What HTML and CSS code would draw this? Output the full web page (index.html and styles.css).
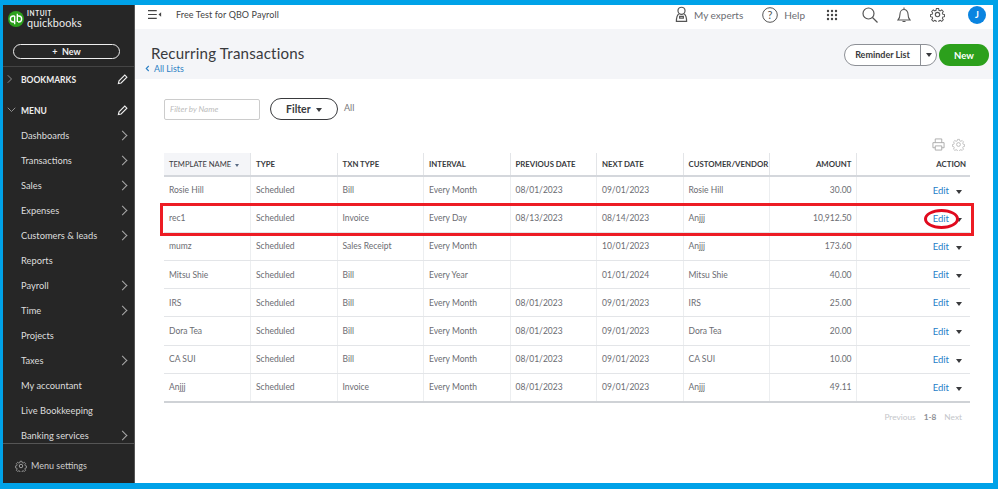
FILE: index.html
```html
<!DOCTYPE html>
<html lang="en">
<head>
<meta charset="utf-8">
<title>Recurring Transactions</title>
<link rel="stylesheet" href="styles.css">
</head>
<body>
<div class="frame">
  <aside class="sidebar">
    <div class="brand">
      <svg class="logo" viewBox="0 0 24 24" width="16" height="16"><circle cx="12" cy="12" r="12" fill="#2ca01c"/><path d="M10 7.500H8a4.500 4.500 0 0 0 0 9h1M14 7.500h2a4.500 4.500 0 0 1 0 9h-1M10 7.500V20M14 4v12.500" fill="none" stroke="#fff" stroke-width="2"/></svg>
      <div class="brand-text"><span class="intuit">INTUIT</span><span class="qb">quickbooks</span></div>
    </div>
    <div class="new-wrap"><button class="new-side">+ &nbsp;New</button></div>
    <div class="side-head bookmarks">
      <svg class="chev" viewBox="0 0 8 12" width="6" height="10"><path d="M1 1l5 5-5 5" fill="none" stroke="#9a9a9a" stroke-width="1.200"/></svg>
      <span>BOOKMARKS</span>
      <svg class="pen" viewBox="0 0 12 12" width="11" height="11"><path d="M1.500 10.500l.7-3L8.500 1.200l2.300 2.300-6.300 6.300z" fill="none" stroke="#eee" stroke-width="1.200"/></svg>
    </div>
    <div class="side-head menu">
      <svg class="chev" viewBox="0 0 12 8" width="9" height="6"><path d="M1 1l5 5 5-5" fill="none" stroke="#9a9a9a" stroke-width="1.200"/></svg>
      <span>MENU</span>
      <svg class="pen" viewBox="0 0 12 12" width="11" height="11"><path d="M1.500 10.500l.7-3L8.500 1.200l2.300 2.300-6.300 6.300z" fill="none" stroke="#eee" stroke-width="1.200"/></svg>
    </div>
    <nav class="nav">
      <a class="nav-item arrow">Dashboards</a>
      <a class="nav-item arrow">Transactions</a>
      <a class="nav-item arrow">Sales</a>
      <a class="nav-item arrow">Expenses</a>
      <a class="nav-item arrow">Customers &amp; leads</a>
      <a class="nav-item">Reports</a>
      <a class="nav-item arrow">Payroll</a>
      <a class="nav-item arrow">Time</a>
      <a class="nav-item">Projects</a>
      <a class="nav-item arrow">Taxes</a>
      <a class="nav-item">My accountant</a>
      <a class="nav-item">Live Bookkeeping</a>
      <a class="nav-item arrow">Banking services</a>
    </nav>
    <div class="menu-settings">
      <svg viewBox="0 0 24 24" width="12" height="12" fill="none" stroke="#aaa" stroke-width="1.800"><circle cx="12" cy="12" r="3.500"/><path d="M10 1.500h4l.6 3 2.300 1 2.600-1.700 2.800 2.800-1.700 2.600 1 2.300 2.900.6v3.800l-2.900.6-1 2.300 1.700 2.600-2.800 2.800-2.600-1.700-2.300 1-.6 2.900h-4l-.6-2.900-2.300-1-2.600 1.700-2.800-2.800 1.700-2.600-1-2.300-2.900-.6v-3.800l2.900-.6 1-2.300-1.700-2.600 2.800-2.800 2.600 1.700 2.300-1z" transform="translate(1.200 1.200) scale(.9)"/></svg>
      <span>Menu settings</span>
    </div>
  </aside>
  <main class="main">
    <header class="topbar">
      <div class="top-left">
        <svg viewBox="0 0 16 12" width="14" height="11"><path d="M0 1.500h10M0 6h10M0 10.500h10" stroke="#444" stroke-width="1.300"/><path d="M15 3.500v5L12 6z" fill="#444"/></svg>
        <span class="company">Free Test for QBO Payroll</span>
      </div>
      <div class="top-right">
        <span class="top-link experts">
          <svg viewBox="0 0 14 18" width="13" height="17" fill="none" stroke="#555" stroke-width="1.300"><circle cx="7" cy="5" r="3.800"/><path d="M4 8.500C2 10 1.500 12 1.500 16.500h11C12.500 12 12 10 10 8.500M5 11h4v2H5z"/></svg>
          My experts
        </span>
        <span class="top-link help">
          <svg viewBox="0 0 16 16" width="16" height="16"><circle cx="8" cy="8" r="7.300" fill="none" stroke="#555" stroke-width="1"/><text x="8" y="11.500" text-anchor="middle" class="q">?</text></svg>
          Help
        </span>
        <svg class="ico grid" viewBox="0 0 12 12" width="12" height="12" fill="#444"><circle cx="2" cy="2" r="1.200"/><circle cx="6" cy="2" r="1.200"/><circle cx="10" cy="2" r="1.200"/><circle cx="2" cy="6" r="1.200"/><circle cx="6" cy="6" r="1.200"/><circle cx="10" cy="6" r="1.200"/><circle cx="2" cy="10" r="1.200"/><circle cx="6" cy="10" r="1.200"/><circle cx="10" cy="10" r="1.200"/></svg>
        <svg class="ico search" viewBox="0 0 16 16" width="16" height="16" fill="none" stroke="#555" stroke-width="1.200"><circle cx="6.500" cy="6.500" r="5.500"/><path d="M10.500 10.500L15.500 15.500"/></svg>
        <svg class="ico bell" viewBox="0 0 14 16" width="14" height="16" fill="none" stroke="#555" stroke-width="1.100"><path d="M1 13h12c-1.500-1.500-2-3-2-6 0-2.500-1.800-4.500-4-4.500S3 4.500 3 7c0 3-.5 4.500-2 6zM5.500 14.500h3M7 .5v2"/></svg>
        <svg class="ico cog" viewBox="0 0 24 24" width="15" height="15" fill="none" stroke="#555" stroke-width="1.800"><circle cx="12" cy="12" r="3.500"/><path d="M10 1.500h4l.6 3 2.300 1 2.600-1.700 2.800 2.800-1.700 2.600 1 2.300 2.900.6v3.800l-2.900.6-1 2.300 1.700 2.600-2.800 2.800-2.600-1.700-2.300 1-.6 2.900h-4l-.6-2.900-2.300-1-2.600 1.700-2.800-2.800 1.700-2.600-1-2.300-2.900-.6v-3.800l2.900-.6 1-2.300-1.700-2.600 2.800-2.800 2.600 1.700 2.300-1z" transform="translate(1.200 1.200) scale(.9)"/></svg>
        <span class="avatar">J</span>
      </div>
    </header>
    <section class="page-head">
      <div class="titles">
        <h1>Recurring Transactions</h1>
        <a class="back"><svg viewBox="0 0 6 8" width="5" height="7"><path d="M4.500 1L1.500 4l3 3" fill="none" stroke="#2b7fc4" stroke-width="1.300"/></svg>All Lists</a>
      </div>
      <div class="head-actions">
        <div class="split"><span class="split-main">Reminder List</span><span class="split-caret"><i class="caret"></i></span></div>
        <button class="new-green">New</button>
      </div>
    </section>
    <section class="content">
      <div class="filters">
        <input class="filter-input" type="text" placeholder="Filter by Name">
        <button class="filter-btn">Filter <i class="caret"></i></button>
        <span class="all">All</span>
      </div>
      <div class="tools">
        <svg viewBox="0 0 14 14" width="13" height="13" fill="none" stroke="#aaa" stroke-width="1"><path d="M3.500 5V1h7v4M3.500 10.500H1V5h12v5.500h-2.500M3.500 8.500h7V13h-7z"/></svg>
        <svg viewBox="0 0 24 24" width="13" height="13" fill="none" stroke="#bbb" stroke-width="1.800"><circle cx="12" cy="12" r="3.500"/><path d="M10 1.500h4l.6 3 2.300 1 2.600-1.700 2.800 2.800-1.700 2.600 1 2.300 2.900.6v3.800l-2.900.6-1 2.300 1.700 2.600-2.800 2.800-2.600-1.700-2.300 1-.6 2.900h-4l-.6-2.900-2.300-1-2.600 1.700-2.800-2.800 1.700-2.600-1-2.300-2.900-.6v-3.800l2.900-.6 1-2.300-1.700-2.600 2.800-2.800 2.600 1.700 2.300-1z" transform="translate(1.200 1.200) scale(.9)"/></svg>
      </div>
      <table class="grid-table">
        <colgroup><col class="c1"><col class="c2"><col class="c3"><col class="c4"><col class="c5"><col class="c6"><col class="c7"><col class="c8"><col class="c9"></colgroup>
        <thead>
          <tr><th class="sorted">TEMPLATE NAME <i class="caret small"></i></th><th>TYPE</th><th>TXN TYPE</th><th>INTERVAL</th><th>PREVIOUS DATE</th><th>NEXT DATE</th><th>CUSTOMER/VENDOR</th><th class="num">AMOUNT</th><th class="num">ACTION</th></tr>
        </thead>
        <tbody>
          <tr><td>Rosie Hill</td><td>Scheduled</td><td>Bill</td><td>Every Month</td><td>08/01/2023</td><td>09/01/2023</td><td>Rosie Hill</td><td class="num">30.00</td><td class="num"><a class="edit">Edit</a><i class="caret"></i></td></tr>
          <tr><td>rec1</td><td>Scheduled</td><td>Invoice</td><td>Every Day</td><td>08/13/2023</td><td>08/14/2023</td><td>Anjjj</td><td class="num">10,912.50</td><td class="num"><a class="edit">Edit</a><i class="caret"></i></td></tr>
          <tr><td>mumz</td><td>Scheduled</td><td>Sales Receipt</td><td>Every Month</td><td></td><td>10/01/2023</td><td>Anjjj</td><td class="num">173.60</td><td class="num"><a class="edit">Edit</a><i class="caret"></i></td></tr>
          <tr><td>Mitsu Shie</td><td>Scheduled</td><td>Bill</td><td>Every Year</td><td></td><td>01/01/2024</td><td>Mitsu Shie</td><td class="num">40.00</td><td class="num"><a class="edit">Edit</a><i class="caret"></i></td></tr>
          <tr><td>IRS</td><td>Scheduled</td><td>Bill</td><td>Every Month</td><td>08/01/2023</td><td>09/01/2023</td><td>IRS</td><td class="num">25.00</td><td class="num"><a class="edit">Edit</a><i class="caret"></i></td></tr>
          <tr><td>Dora Tea</td><td>Scheduled</td><td>Bill</td><td>Every Month</td><td>08/01/2023</td><td>09/01/2023</td><td>Dora Tea</td><td class="num">20.00</td><td class="num"><a class="edit">Edit</a><i class="caret"></i></td></tr>
          <tr><td>CA SUI</td><td>Scheduled</td><td>Bill</td><td>Every Month</td><td>08/01/2023</td><td>09/01/2023</td><td>CA SUI</td><td class="num">10.00</td><td class="num"><a class="edit">Edit</a><i class="caret"></i></td></tr>
          <tr><td>Anjjj</td><td>Scheduled</td><td>Invoice</td><td>Every Month</td><td>08/01/2023</td><td>09/01/2023</td><td>Anjjj</td><td class="num">49.11</td><td class="num"><a class="edit">Edit</a><i class="caret"></i></td></tr>
        </tbody>
      </table>
      <div class="pager"><span>Previous</span><b>1-8</b><span>Next</span></div>
    </section>
  </main>
  <div class="mark-row"></div>
  <div class="mark-oval"></div>
</div>
</body>
</html>
```
FILE: styles.css
```css
* { box-sizing: border-box; }
html, body { margin: 0; height: 100%; }
body { font-family: "Lato", "Open Sans", sans-serif; background: #fff; overflow: hidden; }
.frame {
  position: relative; width: 998px; height: 489px;
  border-style: solid; border-color: #00a2e8; border-width: 5px 5px 6px 3px;
  display: flex; overflow: hidden; background: #fff;
}
.sidebar { width: 132px; flex: none; background: #262626; color: #ddd; display: flex; flex-direction: column; height: 478px; border-right: 1px solid #555; }
.brand { display: flex; align-items: flex-start; gap: 3px; padding: 6px 0 0 5px; height: 37px; }
.logo { flex: none; margin-top: 0; }
.brand-text { display: flex; flex-direction: column; line-height: 1; color: #eee; }
.intuit { font-size: 6.500px; font-weight: 700; letter-spacing: .6px; }
.qb { font-size: 10.800px; margin-top: 0; letter-spacing: .1px; }
.new-wrap { padding: 0 0 0 10px; height: 25px; border-bottom: 1px solid #444; }
.new-side { width: 107px; height: 15px; padding: 0; border: 1.500px solid #eee; border-radius: 8px; background: transparent; color: #eee; font: 700 9px "Lato", sans-serif; display: block; margin-top: 2px; }
.side-head { display: flex; align-items: center; height: 25px; flex: none; font-size: 8.500px; font-weight: 700; color: #eee; position: relative; padding-left: 18px; }
.side-head.menu { margin-top: 6px; }
.side-head .chev { position: absolute; left: 4px; top: 7px; }
.side-head.menu .chev { left: 4px; top: 9px; }
.side-head .pen { position: absolute; right: 6px; top: 7px; }
.nav { display: flex; flex-direction: column; flex: 1; overflow: hidden; }
.nav-item { height: 25px; flex: none; padding-left: 18px; line-height: 25px; font-size: 9.300px; color: #ddd; position: relative; }
.nav-item.arrow::after { content: ""; position: absolute; right: 8px; top: 9px; width: 6px; height: 6px; border-top: 1px solid #aaa; border-right: 1px solid #aaa; transform: rotate(45deg); }
.menu-settings { height: 40px; border-top: 1px solid #555; display: flex; align-items: center; gap: 4px; padding: 4px 0 0 12px; font-size: 9px; color: #ccc; flex: none; }
.main { flex: 1; min-width: 0; display: flex; flex-direction: column; }
.topbar { height: 24px; flex: none; background: #fff; display: flex; justify-content: space-between; align-items: center; padding: 0 7px 5px 13px; }
.top-left { display: flex; align-items: center; gap: 14px; font-size: 9px; color: #444; }
.company { letter-spacing: .1px; }
.top-right { display: flex; align-items: center; }
.top-link { display: flex; align-items: center; gap: 6px; font-size: 10px; color: #6b6c72; }
.experts { margin-right: 19px; }
.help { margin-right: 21px; }
.q { font: 11px "Lato", sans-serif; fill: #555; }
.ico.grid { margin-right: 24px; }
.ico.search { margin-right: 19px; }
.ico.bell { margin-right: 19px; }
.ico.cog { margin-right: 23px; }
.avatar { width: 18px; height: 18px; border-radius: 50%; background: #0a84e0; color: #fff; font-size: 9px; font-weight: 700; display: flex; align-items: center; justify-content: center; }
.page-head { height: 50px; flex: none; background: #f4f5f8; display: flex; justify-content: space-between; padding: 0 4px 0 10px; }
.titles h1 { margin: 14px 0 0 6px; font-size: 15.100px; font-weight: 400; line-height: 20px; color: #393a3d; letter-spacing: .2px; }
.back { display: flex; align-items: center; gap: 4px; font-size: 8.800px; color: #2b7fc4; line-height: 11px; }
.head-actions { display: flex; gap: 2px; padding-top: 15px; }
.split { height: 22px; display: flex; border: 1px solid #8d9096; border-radius: 11px; background: #fff; color: #393a3d; font-size: 9px; font-weight: 700; }
.split-main { width: 76px; text-align: center; line-height: 20px; border-right: 1px solid #8d9096; }
.split-caret { width: 15px; display: flex; align-items: center; justify-content: center; }
.caret { display: inline-block; border-style: solid; border-color: #393a3d transparent transparent; border-width: 4px 3.500px 0; vertical-align: middle; }
.caret.small { border-width: 3px 2.500px 0; border-top-color: #5a6b84; margin-left: 2px; }
.new-green { width: 50px; height: 22px; border: 0; border-radius: 11px; background: #2ca01c; color: #fff; font: 700 9.500px "Lato", sans-serif; padding: 0; }
.content { flex: 1; padding: 0 0 0 29px; position: relative; }
.filters { display: flex; align-items: center; height: 20px; margin-top: 20px; }
.filter-input { width: 96px; height: 21px; border: 1px solid #ccc; border-radius: 2px; padding: 0 5px; font: italic 8px "Lato", sans-serif; background: #fff; }
.filter-input::placeholder { color: #bbb; opacity: 1; }
.filter-btn { width: 68px; height: 22px; margin-left: 10px; border: 1.200px solid #393a3d; border-radius: 11px; background: #fff; color: #393a3d; font: 700 10.500px "Lato", sans-serif; padding: 0; }
.filter-btn .caret { margin-left: 3px; }
.all { font-size: 9px; color: #777; margin: -4px 0 0 6px; }
.tools { display: flex; justify-content: flex-end; gap: 7px; width: 801px; height: 14px; margin-top: 19px; }
.grid-table { width: 806px; border-collapse: collapse; table-layout: fixed; margin-top: 1px; }
.c1, .c2, .c3, .c4, .c5, .c6, .c7, .c8 { width: 86.500px; }
.c9 { width: auto; }
th { height: 23px; padding: 0 0 0 5px; text-align: left; font-size: 7.800px; font-weight: 700; color: #393a3d; border-bottom: 2px solid #d4d7dc; border-right: 1px solid #e3e5e8; white-space: nowrap; }
th.sorted { background: #f4f5f8; font-size: 7.600px; font-weight: 400; color: #393a3d; }
td { height: 28.200px; padding: 0 0 0 5px; font-size: 8.500px; color: #6b6c72; border-bottom: 1px solid #e3e5e8; border-right: 1px solid #eceef0; white-space: nowrap; }
tr > :last-child { border-right: 0; }
tbody tr:last-child td { border-bottom: 2px solid #cfd2d6; }
.num { text-align: right; padding: 0 4px 0 0; }
th.num:last-child { padding-right: 4px; }
td.num:last-child { padding-right: 8px; }
.edit { color: #1f80c8; font-size: 9.500px; margin-right: 7px; }
.pager { display: flex; justify-content: flex-end; gap: 8px; width: 798px; margin-top: 9px; font-size: 8.300px; color: #c4c6ca; line-height: 11px; }
.pager b { font-weight: 700; color: #8d9096; }
.mark-row { position: absolute; left: 157px; top: 198px; width: 814px; height: 33px; border: 3px solid #ed1c24; pointer-events: none; }
.mark-oval { position: absolute; left: 921px; top: 204px; width: 35px; height: 20px; border: 3px solid #e00a1e; border-radius: 50%; pointer-events: none; }
```
